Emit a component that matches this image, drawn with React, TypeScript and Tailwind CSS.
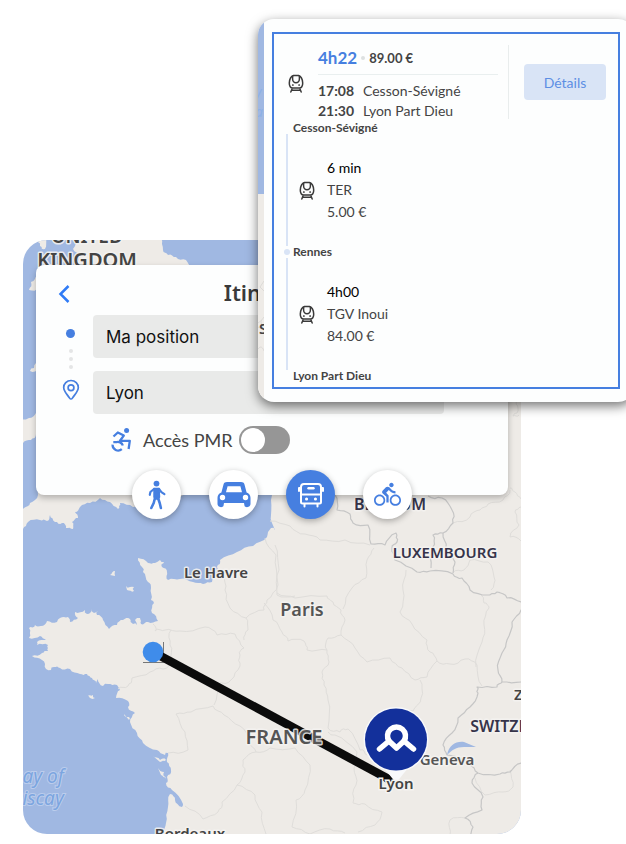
import type { ReactNode } from 'react';
import { MdDirectionsBike } from 'react-icons/md';
import clsx from 'clsx';

type Point = [number, number];

// Breaks straight segments into small deterministic wiggles so that coasts and
// borders look surveyed rather than drawn with a ruler.
function rough(points: Point[], amp: number, depth = 2): Point[] {
  if (depth === 0) return points;
  const out: Point[] = [];
  points.forEach(([x, y], i) => {
    out.push([x, y]);
    const next = points[i + 1];
    if (!next) return;
    const dx = next[0] - x;
    const dy = next[1] - y;
    const length = Math.hypot(dx, dy);
    if (length < 3 || length > 60) return;
    const shift = Math.sin(x * 12.9 + y * 78.2 + depth) * amp;
    out.push([x + dx / 2 - (dy / length) * shift, y + dy / 2 + (dx / length) * shift]);
  });
  return rough(out, amp * 0.6, depth - 1);
}

function toPath(points: Point[], amp = 1.6, close = false) {
  const d = rough(points, amp)
    .map(([x, y], i) => `${i ? 'L' : 'M'}${x.toFixed(1)} ${y.toFixed(1)}`)
    .join('');
  return close ? d + 'Z' : d;
}

const LAND: Point[][] = [
  // continent
  [
    [272, 400], [272, 495], [271, 515], [275, 530], [271, 528], [267, 537], [253, 546], [237, 552], [220, 560],
    [217, 567], [217, 575], [212, 582], [203, 584], [193, 582], [180, 579], [168, 580], [167, 572], [162, 567],
    [164, 562], [160, 560], [155, 563], [148, 563], [138, 558], [142, 567], [143, 572], [148, 582], [151, 588],
    [151, 600], [154, 603], [152, 613], [158, 621], [148, 622], [141, 624], [140, 618], [135, 620], [137, 625],
    [133, 624], [130, 619], [123, 620], [117, 625], [109, 629], [103, 620], [97, 615], [98, 611], [94, 613],
    [92, 609], [87, 614], [85, 610], [75, 612], [78, 618], [70, 622], [68, 617], [60, 618], [57, 622], [47, 621],
    [41, 626], [35, 625], [29, 628], [29, 638], [40, 636], [46, 640], [37, 642], [37, 645], [48, 645], [48, 651],
    [42, 653], [32, 656], [42, 660], [46, 669], [51, 670], [54, 667], [60, 668], [70, 669], [80, 674], [87, 674],
    [92, 678], [96, 683], [98, 679], [103, 686], [108, 684], [117, 685], [120, 690], [116, 698], [128, 701],
    [128, 707], [135, 713], [130, 722], [137, 733], [143, 743], [157, 750], [165, 755], [168, 753], [167, 762],
    [171, 770], [167, 777], [166, 783], [172, 790], [183, 804], [182, 807], [175, 800], [170, 794], [168, 807],
    [166, 823], [165, 834], [165, 900], [621, 900], [621, 400],
  ],
  // south coast of England
  [
    [183, 490], [183, 495], [160, 504], [133, 507], [120, 503], [118, 509], [110, 502], [100, 498], [90, 503],
    [80, 507], [75, 512], [78, 518], [72, 522], [73, 529], [66, 528], [62, 523], [55, 522], [50, 515], [47, 521],
    [40, 520], [28, 522], [23, 529], [20, 529], [20, 509], [24, 508], [30, 503], [38, 495], [38, 485], [120, 440],
  ],
  [[16, 420], [29, 418], [36, 413], [46, 420], [46, 434], [36, 434], [31, 440], [23, 443], [16, 443]],
  // Wales and the Midlands
  [[77, 268], [79, 257], [73, 249], [76, 238], [161, 238], [163, 250], [168, 255], [176, 257], [186, 260], [194, 269]],
  [[34, 238], [45, 238], [45, 249], [40, 246], [38, 242]],
  [[40, 275], [35, 279], [31, 282], [29, 290], [40, 289]],
  [[40, 361], [36, 363], [34, 368], [30, 371], [40, 370]],
  [[110, 575], [115, 571], [115, 576]],
  [[126, 586], [130, 587], [134, 587], [134, 591], [127, 590]],
  [[87, 694], [93, 695], [95, 698], [90, 698]],
  [[124, 714], [129, 717], [129, 720]],
  [[153, 756], [160, 760], [166, 760], [160, 762]],
  [[158, 768], [164, 772], [166, 779], [161, 775]],
];

const COUNTRY_BORDERS: Point[][] = [
  [
    [335, 495], [337, 510], [350, 514], [353, 523], [368, 525], [371, 544], [385, 545], [396, 533], [397, 542],
    [392, 548], [395, 560], [417, 572], [430, 571], [453, 574], [462, 578], [470, 590], [487, 595], [497, 592],
    [507, 598], [521, 602], [540, 606],
  ],
  [[428, 496], [442, 498], [452, 510], [453, 523], [443, 533], [433, 535], [433, 547], [431, 568]],
  [[443, 533], [446, 548], [455, 562], [453, 573]],
  [[540, 600], [521, 610], [512, 622], [507, 640], [502, 653], [498, 670], [502, 682], [521, 682], [540, 680]],
  [
    [502, 682], [497, 687], [477, 687], [478, 693], [470, 707], [458, 718], [452, 733], [443, 745], [447, 755],
    [470, 763], [478, 773], [500, 774], [510, 772], [521, 763], [540, 758],
  ],
  [[478, 773], [472, 783], [483, 797], [482, 810], [465, 818], [473, 827], [472, 840]],
];

const REGION_BORDERS: Point[][] = [
  [[510, 488], [515, 492], [521, 499]],
  [[510, 490], [503, 500], [488, 504], [480, 510], [470, 517], [453, 523]],
  [[521, 541], [510, 537], [519, 525], [515, 512], [521, 507]],
  [[515, 400], [518, 408], [513, 416], [519, 415]],
  [[270, 521], [290, 526], [305, 534], [320, 540], [345, 540], [370, 545]],
  [[265, 538], [276, 555], [278, 585], [267, 600], [264, 610], [246, 618], [230, 608], [225, 590], [222, 575]],
  [[275, 545], [279, 570], [277, 595], [295, 596]],
  [[374, 548], [367, 560], [366, 578], [352, 588], [343, 609]],
  [[277, 593], [295, 598], [327, 596], [333, 602], [341, 610], [345, 620], [341, 635], [328, 638], [327, 650], [307, 650], [304, 641], [288, 641], [282, 632], [273, 620], [264, 603]],
  [[406, 570], [403, 590], [400, 612], [412, 624], [427, 640], [430, 652], [437, 661], [450, 664], [465, 659], [477, 665], [482, 686]],
  [[453, 573], [464, 570], [470, 560], [488, 562], [494, 577], [491, 590]],
  [[341, 635], [355, 648], [367, 662], [390, 658], [402, 668], [415, 680], [427, 677], [437, 661]],
  [[420, 680], [421, 698], [413, 711], [405, 716]],
  [[327, 650], [329, 662], [322, 672], [324, 685], [328, 700], [328, 728], [340, 732], [348, 729], [360, 750], [367, 755]],
  [[480, 594], [484, 603], [489, 608], [484, 625], [482, 642], [476, 667]],
  [[153, 624], [155, 631], [165, 630], [180, 631], [205, 627], [217, 635], [235, 634], [244, 648], [240, 655], [240, 666], [231, 680], [218, 684], [214, 705]],
  [[171, 630], [170, 645], [172, 660], [163, 669], [150, 672], [132, 678], [128, 686], [118, 689]],
  [[246, 618], [248, 630], [244, 640]],
  [[176, 714], [191, 712], [213, 706], [224, 715], [240, 726], [250, 742], [256, 752], [270, 748], [295, 748], [310, 765], [305, 790], [296, 800], [292, 827]],
  [[176, 714], [185, 732], [188, 750], [168, 753]],
  [[256, 752], [243, 760], [245, 772], [237, 785], [222, 802], [218, 812], [203, 819], [185, 806]],
  [[237, 785], [255, 795], [262, 812], [266, 834]],
  [[328, 732], [335, 735], [357, 752], [354, 768], [356, 785], [353, 803], [365, 804], [382, 812], [375, 825], [358, 832]],
  [[292, 827], [310, 834], [330, 829], [345, 833]],
  [[475, 778], [485, 795], [503, 792], [513, 787], [510, 770]],
  [[450, 835], [450, 820], [465, 818]],
];

const LABELS = [
  { text: 'UNITED', x: 87, y: 243, className: 'text-[19px] font-semibold fill-[#444]' },
  { text: 'KINGDOM', x: 87, y: 267, className: 'text-[20px] font-semibold fill-[#444]' },
  { text: 'BELGIUM', x: 390, y: 510, className: 'text-[16px] font-semibold fill-[#36344a]' },
  { text: 'LUXEMBOURG', x: 445, y: 558, className: 'text-[15px] font-semibold fill-[#36344a]' },
  { text: 'Le Havre', x: 216, y: 578, className: 'text-[15px] font-semibold fill-[#444]' },
  { text: 'Paris', x: 302, y: 616, className: 'text-[18px] font-semibold fill-[#555]' },
  { text: 'Zürich', x: 537, y: 700, className: 'text-[15px] font-semibold fill-[#444]' },
  { text: 'SWITZERLAND', x: 526, y: 732, className: 'text-[16px] font-semibold fill-[#36344a]' },
  { text: 'FRANCE', x: 284, y: 744, className: 'text-[20px] font-semibold fill-[#555]' },
  { text: 'Geneva', x: 447, y: 765, className: 'text-[15px] font-semibold fill-[#555]' },
  { text: 'Bordeaux', x: 190, y: 839, className: 'text-[15px] font-semibold fill-[#444]' },
];

const LEGS = [
  { from: 'Cesson-Sévigné', duration: '6 min', line: 'TER', price: '5.00 €' },
  { from: 'Rennes', duration: '4h00', line: 'TGV Inoui', price: '84.00 €' },
];

const MODES = [
  { name: 'À pied', icon: <WalkIcon /> },
  { name: 'Voiture', icon: <CarIcon /> },
  { name: 'Transports en commun', icon: <BusIcon />, active: true },
  { name: 'Vélo', icon: <MdDirectionsBike className="size-[27px]" /> },
];

function WalkIcon() {
  return (
    <svg viewBox="0 0 20 30" className="h-[30px] w-5" fill="none" stroke="currentColor" strokeLinecap="round" strokeLinejoin="round">
      <circle cx="9.5" cy="3.6" r="2.9" fill="currentColor" stroke="none" />
      <path d="M7 8.500h5l.5 8.500-1 2h-3.500l-1-2z" fill="currentColor" strokeWidth="1.500" />
      <path d="M7 9 3.400 12 2.800 14.800M12 9l2.400 3.200 3 2" strokeWidth="2.200" />
      <path d="M8 18l-1.300 5-2.400 5M11 18l1.700 5 1.200 5" strokeWidth="2.600" />
    </svg>
  );
}

function CarIcon() {
  return (
    <svg viewBox="0 0 34 28" className="h-7 w-[34px]" fill="currentColor">
      <path
        fillRule="evenodd"
        d="M10 1h14c1.800 0 3 .8 3.500 2.400L29.600 11.500c2.400.9 3.900 2.700 3.900 5.200V23a3 3 0 0 1-.8 2c-1.400 1.600-4.600 1.600-5.200-.3L27 22H7l-.5 2.700c-.6 1.900-3.800 1.900-5.200.3a3 3 0 0 1-.8-2v-6.300c0-2.500 1.500-4.300 3.900-5.200L6.500 3.400C7 1.800 8.200 1 10 1Zm.6 4.200L9 11.300h16l-1.600-6.100ZM5.500 13.800a2.700 2.700 0 1 0 0 5.400 2.700 2.700 0 0 0 0-5.400Zm23 0a2.700 2.700 0 1 0 0 5.400 2.700 2.700 0 0 0 0-5.400Z"
      />
    </svg>
  );
}

function BusIcon() {
  return (
    <svg viewBox="0 0 28 28" className="size-7" fill="none" stroke="currentColor" strokeWidth="2" strokeLinecap="round" strokeLinejoin="round">
      <path d="M7 3h14a3 3 0 0 1 3 3v15a1.500 1.500 0 0 1-1.500 1.500h-17A1.500 1.500 0 0 1 4 21V6a3 3 0 0 1 3-3ZM4 13.500h20M4 7H2v3M24 7h2v3M7.500 23v2.500M20.500 23v2.500" />
      <path d="M11.500 7.200h5" strokeWidth="2.400" />
      <path d="M9.500 18h.1M18.400 18h.1" strokeWidth="3" />
    </svg>
  );
}

function TrainIcon() {
  return (
    <svg viewBox="0 0 16 19" className="h-[19px] w-4 shrink-0 text-[#3a3a3a]" fill="none" stroke="currentColor" strokeWidth="1.500" strokeLinecap="round" strokeLinejoin="round">
      <path d="M5.500 1.500h5c2.500.8 4 3.500 4.200 7.500.1 3.200-1.300 5-3.400 5H4.700c-2.100 0-3.500-1.800-3.400-5 .2-4 1.700-6.700 4.200-7.500Z" />
      <path d="M4.600 2.200v2.900a3.400 3.600 0 0 0 6.800 0V2.200" />
      <path d="M4.700 11h.3M11 11h.3" strokeWidth="1.700" />
      <path d="M4 15 2.800 18M12 15l1.200 3M4 16.300h8" />
    </svg>
  );
}

function WheelchairIcon() {
  return (
    <svg viewBox="0 0 21 24" className="h-6 w-[21px] text-[#467fe0]" fill="none" stroke="currentColor" strokeWidth="2.300" strokeLinejoin="round">
      <circle cx="15.600" cy="2.600" r="2.500" fill="currentColor" stroke="none" />
      <path d="M2.500 8.500 6.800 4.500 12.800 7.600 9 12.800H18.800L17.600 21" />
      <path d="M2.300 14.200H5.200C7.600 13.200 11 14.500 11.800 17.500" />
      <path d="M1.600 16.600A5.600 5.600 0 0 0 10.800 21.200" />
    </svg>
  );
}

function RouteMap() {
  return (
    <svg
      viewBox="23 240 498 594"
      preserveAspectRatio="xMidYMid slice"
      className="absolute inset-0 size-full bg-[#a0b8e2] font-['Noto_Sans',sans-serif]"
      aria-label="Carte">
      <g fill="#eeebe7">
        {LAND.map((shape, i) => (
          <path key={i} d={toPath(shape, 1.4, true)} />
        ))}
      </g>
      <g fill="none" stroke="#dfddda" strokeLinejoin="round">
        {REGION_BORDERS.map((line, i) => (
          <path key={i} d={toPath(line, 1.8)} />
        ))}
      </g>
      <g fill="none" stroke="#c6c6c6" strokeWidth="1.200" strokeLinejoin="round">
        {COUNTRY_BORDERS.map((line, i) => (
          <path key={i} d={toPath(line, 1.6)} />
        ))}
      </g>
      <path d="M447 755C449 745 456 741 464 742L476 747 464 747C456 747 452 750 447 755Z" fill="#a0b8e2" />

      <path d="M143 662.500H163.500V642" fill="none" stroke="#777" />
      <path d="M153 652 396 783" stroke="#0b0b0b" strokeWidth="8.500" />
      <circle cx="153" cy="652" r="10.300" fill="#3f8cea" />

      <g paintOrder="stroke" stroke="#f5f3f1" strokeOpacity="0.850" strokeWidth="3" strokeLinejoin="round" textAnchor="middle">
        {LABELS.map(({ text, x, y, className }) => (
          <text key={text} x={x} y={y} className={className}>
            {text}
          </text>
        ))}
      </g>
      <g paintOrder="stroke" stroke="#bccdec" strokeWidth="2" className="fill-[#7ba5e0] text-[19px] italic">
        <text x="11" y="783">Bay of</text>
        <text x="11" y="805">Biscay</text>
      </g>

      <path d="M384 768H408L396 783Z" fill="#f8f9fb" />
      <circle cx="396" cy="739.500" r="32.500" fill="#f8f9fb" />
      <circle cx="396" cy="739.500" r="31" fill="#13309b" />
      <g fill="none" stroke="#fff" strokeWidth="5.500" strokeLinecap="round" strokeLinejoin="round">
        <path d="M379.500 749 389 741 396.500 748 404 741 413.500 749" />
        <path d="M389 741A9 9 0 1 1 404 741" />
      </g>
      <text
        x="396"
        y="789"
        textAnchor="middle"
        paintOrder="stroke"
        stroke="#f5f3f1"
        strokeWidth="3"
        className="fill-[#444] text-[15px] font-semibold">
        Lyon
      </text>
    </svg>
  );
}

function SearchField({ id, label, value, icon }: { id: string; label: string; value: string; icon: ReactNode }) {
  return (
    <div className="flex items-center">
      <label htmlFor={id} className="flex w-[57px] justify-center pl-3 text-[#467fe0]">
        <span className="sr-only">{label}</span>
        {icon}
      </label>
      <input
        id={id}
        defaultValue={value}
        className="h-[43px] min-w-0 flex-1 rounded bg-[#e9eae9] px-[13px] font-['Inter',sans-serif] text-[17px] text-[#111] outline-none"
      />
    </div>
  );
}

function SearchPanel() {
  return (
    <section className="relative mx-[13px] mt-[25px] rounded-lg bg-[#fdfefe] shadow-[0_3px_6px_rgba(0,0,0,0.25)]">
      <header className="flex h-[50px] items-center px-5 pt-1">
        <button aria-label="Retour" className="pt-1 text-[#2f7bf6]">
          <svg viewBox="0 0 16 20" className="h-5 w-4" fill="none" stroke="currentColor" strokeWidth="2.500">
            <path d="M12.500 2 4.500 10l8 8" />
          </svg>
        </button>
        <h1 className="flex-1 pr-3 text-center font-['Noto_Sans',sans-serif] text-[22px] font-semibold text-[#3a3a3a]">
          Itinéraire
        </h1>
      </header>

      <div className="relative flex flex-col gap-[13px] pr-16">
        <SearchField
          id="from"
          label="Départ"
          value="Ma position"
          icon={<span className="mb-1.5 size-[9px] rounded-full bg-[#467fe0]" />}
        />
        <SearchField
          id="to"
          label="Arrivée"
          value="Lyon"
          icon={
            <svg viewBox="0 0 18 22" className="mb-1.5 h-[22px] w-[18px]" fill="none" stroke="currentColor" strokeWidth="1.700">
              <path d="M9 1.500c4.300 0 7.300 3.100 7.300 7 0 4-3.600 7-5.900 10.600-.8 1.200-2 1.200-2.800 0C5.300 15.500 1.700 12.500 1.700 8.500c0-3.900 3-7 7.300-7Z" />
              <circle cx="9" cy="8.700" r="2.900" />
            </svg>
          }
        />
        <div className="absolute top-[34px] left-[33px] flex flex-col gap-1">
          <span className="size-1 rounded-full bg-[#e4e5e6]" />
          <span className="size-1 rounded-full bg-[#e4e5e6]" />
          <span className="size-1 rounded-full bg-[#e4e5e6]" />
        </div>
      </div>

      <div className="flex items-center pt-3 pl-[75px]">
        <WheelchairIcon />
        <label htmlFor="pmr" className="ml-[11px] text-[18px] leading-7 text-[#444]">
          Accès PMR
        </label>
        <input
          id="pmr"
          type="checkbox"
          role="switch"
          className="ml-1.5 flex h-7 w-[51px] cursor-pointer appearance-none items-center rounded-full bg-[#969696] px-0.5 before:size-6 before:rounded-full before:bg-white before:content-[''] checked:justify-end checked:bg-[#467fe0]"
        />
      </div>

      <nav className="-mb-6 flex justify-center gap-7 pt-4">
        {MODES.map(({ name, icon, active }) => (
          <button
            key={name}
            aria-label={name}
            className={clsx(
              'flex size-[49px] items-center justify-center rounded-full shadow-[0_2px_6px_rgba(0,0,0,0.3)]',
              active ? 'bg-[#467fe0] text-white' : 'bg-white text-[#467fe0]'
            )}>
            {icon}
          </button>
        ))}
      </nav>
    </section>
  );
}

function TripCard() {
  return (
    <article className="absolute top-[19px] -right-2 left-[258px] flex overflow-hidden rounded-2xl bg-[#fdfefe] shadow-[0_4px_12px_rgba(0,0,0,0.55)]">
      {/* sliver of the map that stays visible beside the results */}
      <svg className="w-1.5 shrink-0 self-stretch bg-[#eeebe7] font-['Noto_Sans',sans-serif]" aria-hidden="true">
        <rect width="6" height="175" fill="#a0b8e2" />
        <path d="M6 262 2 268l4 4M0 304l4-3M0 308l4 2-1-8 3-4M0 330c3-4 5-1 6 2" fill="none" stroke="#dcdad7" />
        <text x="-3" y="78" className="fill-[#8db0e6] text-[14px] italic">y</text>
        <text x="-3" y="98" className="fill-[#8db0e6] text-[14px] italic">a</text>
        <text x="1" y="315" className="fill-[#444] text-[15px] font-semibold">S</text>
      </svg>

      <div className="my-[13px] mr-3.5 ml-2 flex-1 border-2 border-[#467fe0] text-[#444]">
        <div className="flex pt-[11px] pl-3.5">
          <div className="flex w-[30px] items-center">
            <TrainIcon />
          </div>
          <div className="w-[180px] leading-5">
            <div className="flex h-[30px] items-center border-b border-[#e9efef] pb-1">
              <strong className="text-[17px] text-[#467fe0]">4h22</strong>
              <span className="mx-1 size-1 rounded-full bg-[#dde1e1]" />
              <strong className="text-[13px]">89.00 €</strong>
            </div>
            <dl className="grid grid-cols-[45px_1fr] pt-1.5 text-[14px]">
              <dt className="font-bold">17:08</dt>
              <dd>Cesson-Sévigné</dd>
              <dt className="font-bold">21:30</dt>
              <dd>Lyon Part Dieu</dd>
            </dl>
          </div>
          <div className="ml-2.5 flex h-[74px] flex-1 items-center border-l border-[#e9eded] pl-[15px]">
            <button className="h-9 w-[82px] rounded bg-[#d9e4f6] text-[14px] text-[#5d8fe4]">Détails</button>
          </div>
        </div>

        <ol className="-mt-[3px] pb-px pl-[7px]">
          {LEGS.map((leg, i) => (
            <li key={leg.from} className="flex">
              <div className="flex w-3 flex-col items-center">
                <div className="flex h-5 items-center">
                  {i > 0 && <span className="size-1.5 rounded-full bg-[#d9e4f6]" />}
                </div>
                <div className="-my-1 w-0.5 flex-1 bg-[#d9e4f6]" />
              </div>
              <div>
                <h2 className="h-5 text-[12px] leading-5 font-bold">{leg.from}</h2>
                <div className="flex h-[104px] items-center gap-3 pl-1.5">
                  <TrainIcon />
                  <div className="text-[14px] leading-[22px]">
                    <p className="text-black">{leg.duration}</p>
                    <p>{leg.line}</p>
                    <p>{leg.price}</p>
                  </div>
                </div>
              </div>
            </li>
          ))}
          <li className="h-5 pl-3 text-[12px] leading-5 font-bold">Lyon Part Dieu</li>
        </ol>
      </div>
    </article>
  );
}

export default function App() {
  return (
    <main className="relative overflow-hidden bg-white pt-60 pr-[105px] pb-2.5 pl-[23px] font-['Lato',sans-serif]">
      <div className="relative flex min-h-[594px] flex-col overflow-hidden rounded-3xl">
        <RouteMap />
        <SearchPanel />
      </div>
      <TripCard />
    </main>
  );
}
